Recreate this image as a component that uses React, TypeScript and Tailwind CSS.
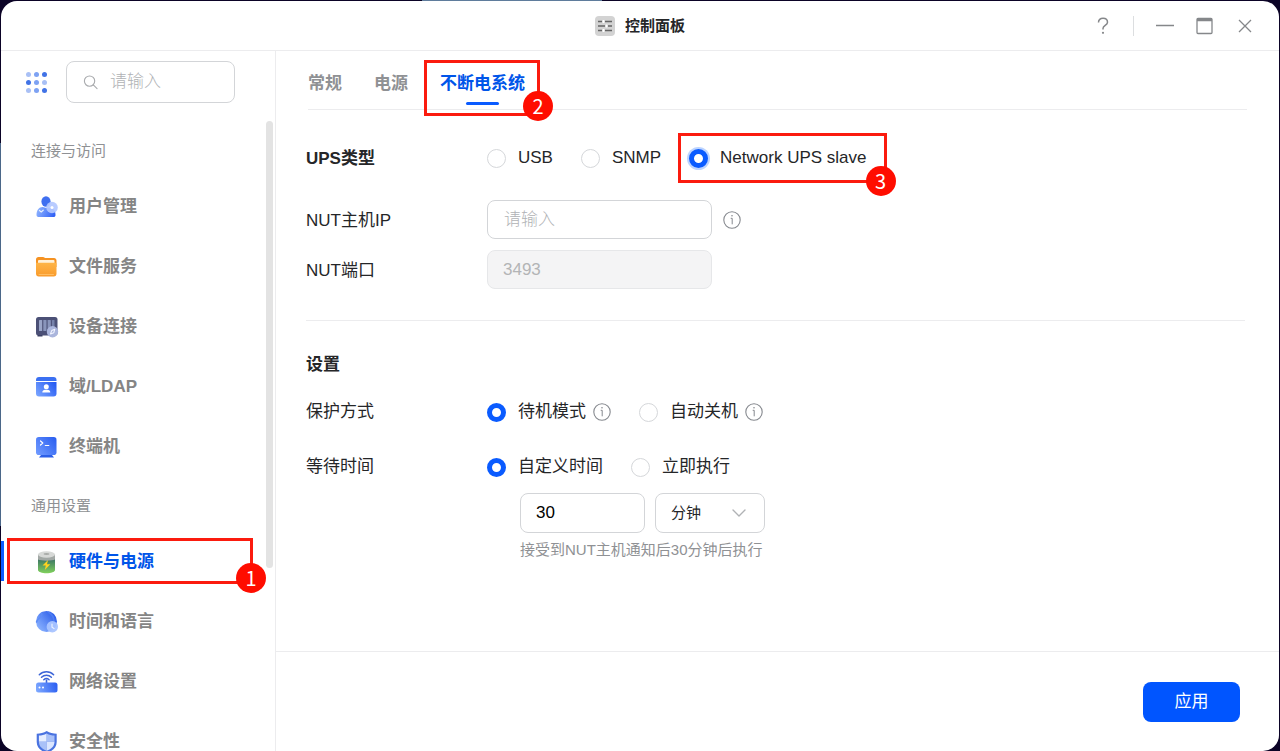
import { useState } from "react";
import type { ReactNode } from "react";
import clsx from "clsx";

const UserIcon = () => (
  <svg width="24" height="24" viewBox="0 0 24 24" fill="none">
    <defs>
      <linearGradient id="user-body" x1="2" y1="14" x2="20" y2="22" gradientUnits="userSpaceOnUse">
        <stop stopColor="#8fb4ff" />
        <stop offset="1" stopColor="#2a5bf5" />
      </linearGradient>
    </defs>
    <ellipse cx="11" cy="6.5" rx="4.6" ry="5.2" fill="#3f6ff0" />
    <path d="M1.5 20c0-5 2.500-8 6-8 2 0 2.500 1 4 1s6-1 8 2.500c.8 1.500 1 3 1 4.500 0 1.500-.8 2-2 2H3.500c-1.200 0-2-.7-2-2z" fill="url(#user-body)" />
    <path d="M4.500 15.500l1.700 1.500 2-1.800" stroke="#e4eeff" strokeWidth="1.200" strokeLinecap="round" />
    <circle cx="17" cy="12.500" r="5.800" fill="#b3c8ff" fillOpacity=".92" />
    <circle cx="17" cy="12.500" r="1.500" fill="#fff" />
  </svg>
);

const FolderIcon = () => (
  <svg width="24" height="24" viewBox="0 0 24 24" fill="none">
    <defs>
      <linearGradient id="folder-front" x1="12" y1="6" x2="12" y2="22" gradientUnits="userSpaceOnUse">
        <stop stopColor="#ffb84a" />
        <stop offset="1" stopColor="#f99a2b" />
      </linearGradient>
    </defs>
    <path d="M1 4.500C1 3 2 2 3.500 2h4.200c1 0 1.700.4 2.300 1h9c1.500 0 2.500 1 2.500 2.500V12H1z" fill="#f59222" />
    <rect x="3" y="5" width="16.500" height="5" rx="1" fill="#fff1d8" />
    <path d="M1 7.800h20.500v11c0 1.500-1 2.700-2.700 2.700H3.700C2 21.500 1 20.300 1 18.800z" fill="url(#folder-front)" />
    <path d="M4 19.500h14.500" stroke="#ffbd62" strokeLinecap="round" />
  </svg>
);

const DeviceIcon = () => (
  <svg width="24" height="24" viewBox="0 0 24 24" fill="none">
    <rect x="1" y="2" width="21.500" height="18.500" rx="2.500" fill="#4b5076" />
    <path d="M2.500 20h5v1.500h-5z" fill="#3c4065" />
    <rect x="4" y="5" width="3.200" height="11" rx=".6" fill="#9aa5c8" />
    <rect x="8.300" y="5" width="3.200" height="11" rx=".6" fill="#8995bb" />
    <rect x="12.600" y="5" width="3.200" height="11" rx=".6" fill="#8995bb" />
    <rect x="16.900" y="5" width="2.600" height="9" rx=".6" fill="#7682aa" />
    <circle cx="17.500" cy="16.800" r="5.700" fill="#aab5dc" />
    <path d="M15.500 18.900l1.300-3.500 3-1.200-1 3.500z" stroke="#f1f4ff" strokeWidth="1.100" strokeLinejoin="round" />
  </svg>
);

const LdapIcon = () => (
  <svg width="24" height="24" viewBox="0 0 24 24" fill="none">
    <defs>
      <linearGradient id="ldap-bg" x1="2" y1="21" x2="20" y2="6" gradientUnits="userSpaceOnUse">
        <stop stopColor="#7aa5ff" />
        <stop offset="1" stopColor="#2257f2" />
      </linearGradient>
    </defs>
    <path d="M1 5c0-2 1-3 3-3h14.500c2 0 3 1 3 3v1H1z" fill="#3b70f2" />
    <path d="M1 7h20.500v11.500c0 2-1 3-3 3H4c-2 0-3-1-3-3z" fill="url(#ldap-bg)" />
    <circle cx="11.300" cy="11.700" r="2.500" fill="#fff" />
    <path d="M7.300 17.500c0-2 1.300-2.800 2.700-2.800h2.600c1.400 0 2.700.8 2.700 2.800z" fill="#fff" />
  </svg>
);

const TerminalIcon = () => (
  <svg width="24" height="24" viewBox="0 0 24 24" fill="none">
    <defs>
      <linearGradient id="terminal-bg" x1="2" y1="18" x2="20" y2="3" gradientUnits="userSpaceOnUse">
        <stop stopColor="#6d98ff" />
        <stop offset="1" stopColor="#2c60f0" />
      </linearGradient>
    </defs>
    <path d="M6 20h11l2 2.500H4z" fill="#2c5fe8" />
    <rect x="1" y="2" width="20.500" height="18" rx="2.800" fill="url(#terminal-bg)" />
    <path d="M5.500 6l2.300 2-2.300 2M10.300 10.500h3.500" stroke="#fff" strokeWidth="1.200" strokeLinecap="round" strokeLinejoin="round" />
  </svg>
);

const BatteryIcon = () => (
  <svg width="24" height="24" viewBox="0 0 24 24" fill="none">
    <defs>
      <linearGradient id="battery-body" x1="11.500" y1="9" x2="11.500" y2="23" gradientUnits="userSpaceOnUse">
        <stop stopColor="#3c7565" />
        <stop offset="1" stopColor="#7fd05c" />
      </linearGradient>
    </defs>
    <path d="M3 5v15c0 2 4 3.200 8.500 3.200S20 22 20 20V5z" fill="url(#battery-body)" />
    <path d="M3 4.500v5c2 1.500 15 1.500 17 0v-5z" fill="#a2a8a5" />
    <ellipse cx="11.500" cy="4.500" rx="8.500" ry="3.200" fill="#d7d9d7" />
    <ellipse cx="11.500" cy="4" rx="3" ry="1.100" fill="#a9aca9" />
    <path d="M13 10l-5.500 5.500h3.300l-1 4.500 5.500-5.700h-3.300z" fill="#ffd21f" />
  </svg>
);

const GlobeIcon = () => (
  <svg width="24" height="24" viewBox="0 0 24 24" fill="none">
    <defs>
      <linearGradient id="globe-bg" x1="2" y1="18" x2="19" y2="4" gradientUnits="userSpaceOnUse">
        <stop stopColor="#8ab2ff" />
        <stop offset="1" stopColor="#2f60ea" />
      </linearGradient>
    </defs>
    <circle cx="11.500" cy="11.500" r="10.500" fill="url(#globe-bg)" />
    <path d="M6 2.500C8 5 6 7 4 8.500s-2 3-2.800 4" stroke="#5d8cf7" strokeWidth="1.500" />
    <path d="M13 2c4 2 6 6 6 10" stroke="#4d7cf2" strokeWidth="1.500" />
    <circle cx="17.300" cy="16.800" r="5.700" fill="#a9c4ff" fillOpacity=".95" />
    <path d="M17 14v3.200l2 1.200" stroke="#e9f0ff" strokeWidth="1.200" strokeLinecap="round" />
  </svg>
);

const RouterIcon = () => (
  <svg width="24" height="24" viewBox="0 0 24 24" fill="none">
    <defs>
      <linearGradient id="router-bg" x1="2" y1="20" x2="21" y2="14" gradientUnits="userSpaceOnUse">
        <stop stopColor="#7ba6ff" />
        <stop offset="1" stopColor="#2f62f2" />
      </linearGradient>
    </defs>
    <path d="M4.300 4.800c4-4 10.300-4 14.300 0M6.500 7.300c2.800-2.700 7.100-2.700 9.900 0M8.800 9.700c1.500-1.400 3.800-1.400 5.300 0" stroke="#3e66d8" strokeWidth="1.500" strokeLinecap="round" />
    <path d="M11.500 9.500V13" stroke="#3e66d8" strokeWidth="1.600" />
    <rect x="1" y="12.500" width="21.500" height="10" rx="2.500" fill="url(#router-bg)" />
    <circle cx="4.500" cy="17.500" r="1" fill="#fff" />
    <circle cx="8" cy="17.500" r="1" fill="#fff" />
  </svg>
);

const ShieldIcon = () => (
  <svg width="24" height="24" viewBox="0 0 24 24" fill="none">
    <path d="M11.700 1c3 2 6.500 2.600 10 2.700V12c0 5.500-4 9-10 11-6-2-10-5.500-10-11V3.700c3.500-.1 7-.7 10-2.700z" fill="#4a73e0" />
    <path d="M11.700 3.400v8.300H3.900V5.600c2.700-.2 5.400-.8 7.800-2.200z" fill="#e6eeff" />
    <path d="M11.700 3.400v8.300h7.800V5.600c-2.700-.2-5.400-.8-7.800-2.200z" fill="#a9c1f8" />
    <path d="M11.700 20.700v-9H3.900c.1 4.500 3 7.300 7.800 9z" fill="#a9c1f8" />
    <path d="M11.700 20.700v-9h7.800c-.1 4.500-3 7.300-7.800 9z" fill="#dbe6ff" />
  </svg>
);

const InfoIcon = () => (
  <svg width="18" height="18" viewBox="0 0 18 18" fill="none" stroke="#85888e" strokeWidth="1.100">
    <circle cx="9" cy="9" r="8.200" />
    <path d="M7.700 7.300h1.500v6" strokeWidth="1" />
    <circle cx="9" cy="4.800" r=".8" fill="#85888e" stroke="none" />
  </svg>
);

const sections = [
  {
    title: "连接与访问",
    items: [
      { label: "用户管理", icon: UserIcon },
      { label: "文件服务", icon: FolderIcon },
      { label: "设备连接", icon: DeviceIcon },
      { label: "域/LDAP", icon: LdapIcon },
      { label: "终端机", icon: TerminalIcon },
    ],
  },
  {
    title: "通用设置",
    items: [
      { label: "硬件与电源", icon: BatteryIcon, step: 1 },
      { label: "时间和语言", icon: GlobeIcon },
      { label: "网络设置", icon: RouterIcon },
      { label: "安全性", icon: ShieldIcon },
    ],
  },
];

const tabs = [{ label: "常规" }, { label: "电源" }, { label: "不断电系统", step: 2 }];

const dots = ["#a9c0f5", "#7ea2f3", "#4173e6", "#4173e6", "#7ea2f3", "#a9c0f5", "#a9c0f5", "#7ea2f3", "#4173e6"];

// Red frame with a numbered badge on its lower right corner
function Callout({ step, className, badge }: { step: number; className: string; badge: string }) {
  return (
    <span className={clsx("pointer-events-none absolute z-10 border-3 border-[#fb1b0e]", className)}>
      <span
        className={clsx(
          "absolute flex size-[30px] items-center justify-center rounded-full bg-[#ff0d00] font-['Noto_Sans_CJK_SC',sans-serif] text-xl leading-none text-white",
          badge
        )}
      >
        {step}
      </span>
    </span>
  );
}

type RadioProps = {
  name: string;
  label: string;
  checked: boolean;
  onChange: () => void;
  focused?: boolean;
  children?: ReactNode;
};

function Radio({ name, label, checked, onChange, focused, children }: RadioProps) {
  return (
    <div className="relative flex items-center gap-[7px]">
      <label className="flex items-center gap-3 whitespace-nowrap">
        <input
          type="radio"
          name={name}
          checked={checked}
          onChange={onChange}
          className={clsx(
            "size-[19px] shrink-0 appearance-none rounded-full border border-[#d5d7da] bg-white checked:border-5 checked:border-[#0a5bff]",
            focused && "ring-2 ring-[#bdd4ff]"
          )}
        />
        {label}
      </label>
      {children}
    </div>
  );
}

function InfoButton() {
  return (
    <button type="button" aria-label="说明" className="shrink-0">
      <InfoIcon />
    </button>
  );
}

function Sidebar() {
  const [active, setActive] = useState("硬件与电源");

  return (
    <aside className="flex w-[275px] shrink-0 flex-col border-r border-[#ececee]">
      <div className="flex items-center gap-[19px] pt-[10px] pr-10 pl-[25px]">
        <button type="button" aria-label="菜单" className="grid shrink-0 grid-cols-3 gap-[3px]">
          {dots.map((color, i) => (
            <span key={i} className="size-[5px] rounded-full" style={{ background: color }} />
          ))}
        </button>
        <div className="flex h-[42px] min-w-0 flex-1 items-center gap-3 rounded-lg border border-[#d3d5d8] pl-4">
          <svg width="15" height="15" viewBox="0 0 16 16" fill="none" stroke="#a9abae" strokeWidth="1.200" className="shrink-0">
            <circle cx="7" cy="6.500" r="5.500" />
            <path d="M11 10.500l4 4" strokeLinecap="round" />
          </svg>
          <input
            type="text"
            aria-label="搜索"
            placeholder="请输入"
            className="w-full min-w-0 font-light outline-none placeholder:text-[#b0b2b5]"
          />
        </div>
      </div>

      <div className="mt-[18px] flex min-h-0 flex-1">
        <nav className="min-w-0 flex-1 pt-5">
          {sections.map((section) => (
            <div key={section.title} className="mb-[30px]">
              <h2 className="pl-[30px] text-[15px] leading-5 text-[#8f9194]">{section.title}</h2>
              <ul className="mt-[25px] space-y-5">
                {section.items.map((item) => (
                  <li key={item.label} className="relative">
                    <button
                      type="button"
                      onClick={() => setActive(item.label)}
                      className={clsx(
                        "flex h-10 w-full items-center gap-[10px] border-l-3 pt-0.5 pl-[31px] font-bold",
                        active === item.label ? "border-[#0a5bff] text-[#0055e9]" : "border-transparent text-[#858585]"
                      )}
                    >
                      <item.icon />
                      {item.label}
                    </button>
                    {"step" in item && item.step && (
                      <Callout
                        step={item.step}
                        className="-top-[3px] -bottom-[3px] left-[6px] right-[13px]"
                        badge="-right-4 -bottom-3"
                      />
                    )}
                  </li>
                ))}
              </ul>
            </div>
          ))}
        </nav>
        <div className="w-[7px] shrink-0">
          <div className="h-[71%] rounded-sm bg-[#e3e3e3]" />
        </div>
        <div className="w-0.5 shrink-0" />
      </div>
    </aside>
  );
}

function UpsSettings() {
  const [type, setType] = useState("Network UPS slave");
  const [mode, setMode] = useState("待机模式");
  const [wait, setWait] = useState("自定义时间");

  return (
    <form className="pt-7">
      <div className="flex h-10 items-center">
        <h3 className="w-[181px] shrink-0 pt-0.5 font-bold">UPS类型</h3>
        <div className="flex items-center gap-7">
          <Radio name="type" label="USB" checked={type === "USB"} onChange={() => setType("USB")} />
          <Radio name="type" label="SNMP" checked={type === "SNMP"} onChange={() => setType("SNMP")} />
          <Radio
            name="type"
            label="Network UPS slave"
            checked={type === "Network UPS slave"}
            onChange={() => setType("Network UPS slave")}
            focused
          >
            <Callout step={3} className="-top-[13px] -right-5 -bottom-[13px] -left-[11px]" badge="-right-3 -bottom-4" />
          </Radio>
        </div>
      </div>

      <div className="mt-[22px] flex items-center">
        <label htmlFor="nut-ip" className="w-[181px] shrink-0 pt-0.5">NUT主机IP</label>
        <input
          id="nut-ip"
          type="text"
          placeholder="请输入"
          className="mr-[11px] h-[39px] w-[225px] rounded-lg border border-[#d3d5d8] px-4 font-light outline-none placeholder:text-[#b0b2b5]"
        />
        <InfoButton />
      </div>
      <div className="mt-[11px] flex items-center">
        <label htmlFor="nut-port" className="w-[181px] shrink-0 pt-0.5">NUT端口</label>
        <input
          id="nut-port"
          type="text"
          disabled
          defaultValue="3493"
          className="h-[39px] w-[225px] rounded-lg border border-[#e6e7e9] bg-[#f4f4f5] px-[15px] text-[#b3b4b6]"
        />
      </div>

      <hr className="mt-[31px] border-[#ececee]" />

      <h3 className="mt-8 font-bold">设置</h3>
      <div className="mt-[23px] flex items-center">
        <span className="w-[181px] shrink-0">保护方式</span>
        <div className="flex items-center gap-7">
          <Radio name="mode" label="待机模式" checked={mode === "待机模式"} onChange={() => setMode("待机模式")}>
            <InfoButton />
          </Radio>
          <Radio name="mode" label="自动关机" checked={mode === "自动关机"} onChange={() => setMode("自动关机")}>
            <InfoButton />
          </Radio>
        </div>
      </div>
      <div className="mt-[31px] flex items-start">
        <span className="w-[181px] shrink-0">等待时间</span>
        <div>
          <div className="flex items-center gap-7">
            <Radio name="wait" label="自定义时间" checked={wait === "自定义时间"} onChange={() => setWait("自定义时间")} />
            <Radio name="wait" label="立即执行" checked={wait === "立即执行"} onChange={() => setWait("立即执行")} />
          </div>
          <div className="mt-[14px] flex gap-[10px] pl-[33px]">
            <input
              type="text"
              aria-label="等待时间"
              defaultValue="30"
              className="h-10 w-[125px] rounded-lg border border-[#d3d5d8] px-[15px] text-black outline-none"
            />
            <div className="relative">
              <select
                aria-label="时间单位"
                className="h-10 w-[110px] appearance-none rounded-lg border border-[#d3d5d8] bg-white px-[15px] text-[15px] outline-none"
              >
                <option>分钟</option>
              </select>
              <svg width="14" height="8" viewBox="0 0 14 8" fill="none" className="pointer-events-none absolute top-4 right-[19px]">
                <path d="M1 1l6 6 6-6" stroke="#b0b2b5" strokeWidth="1.400" strokeLinecap="round" strokeLinejoin="round" />
              </svg>
            </div>
          </div>
          <p className="mt-[7px] pl-[33px] text-[15px] leading-5 text-[#8f9194]">接受到NUT主机通知后30分钟后执行</p>
        </div>
      </div>
    </form>
  );
}

export default function App() {
  const [tab, setTab] = useState("不断电系统");

  return (
    <div className="relative flex h-screen flex-col overflow-hidden bg-[#0b0326] px-px pt-px font-['Liberation_Sans','Noto_Sans_CJK_SC',sans-serif] text-[17px] leading-6 text-[#252628]">
      {/* Wallpaper showing past the window edges */}
      <span className="absolute top-[19%] left-0 h-[51%] w-px bg-[#4b6789]" />
      <span className="absolute top-0 left-[33%] h-px w-[14%] bg-[#5f7c9c]" />

      <div className="relative flex min-h-0 flex-1 flex-col overflow-hidden rounded-2xl bg-white">
        <header className="grid h-[50px] shrink-0 grid-cols-[1fr_auto_1fr] items-center border-b border-[#ececee]">
          <div className="col-start-2 flex items-center gap-[10px]">
            <svg width="20" height="20" viewBox="0 0 20 20" fill="none">
              <rect width="20" height="20" rx="4" fill="#d3d3d3" />
              <path d="M3 5.500h4M10 5.500h7M3 10h7M13 10h4M3 14.500h4M10 14.500h7" stroke="#666" strokeWidth="1.400" />
              <path d="M8.500 4v3M11.500 8.500v3M8.500 13v3" stroke="#fff" strokeWidth="1.800" />
            </svg>
            <h1 className="text-[15px] font-bold">控制面板</h1>
          </div>
          <div className="flex items-center justify-end pr-[14px] text-[#85878a]">
            <button type="button" aria-label="帮助" className="flex size-10 items-center justify-center">
              <svg width="12" height="18" viewBox="0 0 12 18" fill="none" stroke="currentColor" strokeWidth="1.500">
                <path d="M1.500 5.500C1.500 2.800 3.300 1.200 6 1.200s4.500 1.600 4.500 4c0 3-4.500 3.500-4.500 6.300v1" />
                <circle cx="6" cy="15.800" r="1.100" fill="currentColor" stroke="none" />
              </svg>
            </button>
            <span className="mr-[11px] ml-[10px] h-5 w-px bg-[#dcdee0]" />
            <button type="button" aria-label="最小化" className="flex size-10 items-center justify-center">
              <svg width="18" height="18" viewBox="0 0 18 18" stroke="currentColor" strokeWidth="1.300">
                <path d="M0 8.500h18" />
              </svg>
            </button>
            <button type="button" aria-label="最大化" className="flex size-10 items-center justify-center">
              <svg width="18" height="18" viewBox="0 0 18 18" fill="none" stroke="currentColor" strokeWidth="1.300">
                <rect x="1" y="1.500" width="15" height="15" rx="1" />
                <path d="M1 3h15" strokeWidth="2.400" />
              </svg>
            </button>
            <button type="button" aria-label="关闭" className="flex size-10 items-center justify-center">
              <svg width="14" height="14" viewBox="0 0 14 14" stroke="currentColor" strokeWidth="1.300">
                <path d="M1 1l12 12M13 1L1 13" />
              </svg>
            </button>
          </div>
        </header>

        <div className="flex min-h-0 flex-1">
          <Sidebar />

          <main className="flex min-w-0 flex-1 flex-col">
            <div className="min-h-0 flex-1 pr-[34px] pl-[30px]">
              <div role="tablist" className="-mr-0.5 ml-0.5 flex gap-8 border-b border-[#ececee] pt-[10px] pb-1">
                {tabs.map(({ label, step }) => (
                  <div key={label} className="relative">
                    <button
                      type="button"
                      role="tab"
                      aria-selected={tab === label}
                      onClick={() => setTab(label)}
                      className={clsx("h-11 pt-0.5 font-bold", tab === label ? "text-[#0055e9]" : "text-[#8f9194]")}
                    >
                      {label}
                    </button>
                    {tab === label && (
                      <span className="absolute inset-x-0 bottom-0 mx-auto h-[3px] w-[33px] rounded-full bg-[#0a5bff]" />
                    )}
                    {step && (
                      <Callout step={step} className="-top-px -right-[15px] -bottom-[11px] -left-4" badge="-right-4 -bottom-2" />
                    )}
                  </div>
                ))}
              </div>
              <UpsSettings />
            </div>

            <footer className="flex h-[100px] shrink-0 items-center justify-end border-t border-[#ececee] pr-[39px]">
              <button type="button" className="h-10 w-[97px] rounded-lg bg-[#0055ff] text-white">
                应用
              </button>
            </footer>
          </main>
        </div>
      </div>
    </div>
  );
}
